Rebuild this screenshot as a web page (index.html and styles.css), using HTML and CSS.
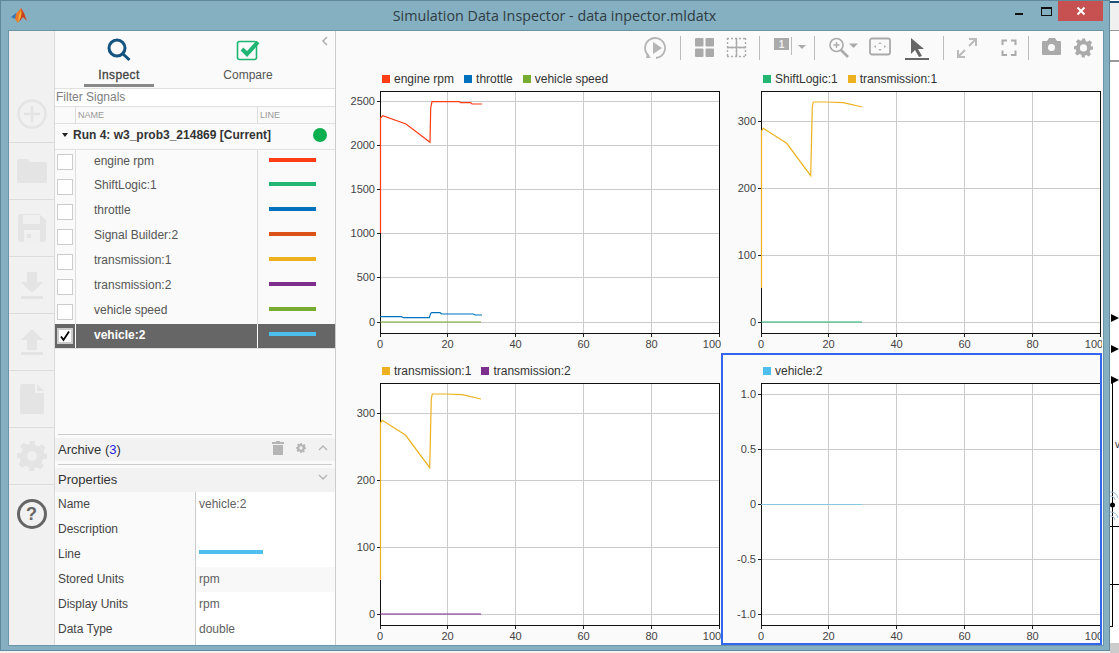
FILE: index.html
```html
<!DOCTYPE html>
<html lang="en">
<head>
    <title>Simulation Data Inspector</title>
    <link rel="stylesheet" href="styles.css">
</head>
<body>
<div class="window">
    <div class="titlebar">
        <svg class="logo" width="17" height="16" viewBox="0 0 17 16">
            <polygon points="0,9 5,5 8,8 4,11" fill="#3a78b5"/>
            <polygon points="5,6 10,0 12,4 7,15 4,11" fill="#e8792a"/>
            <polygon points="10,0 13,5 16,13 12,9 8,14 11,5" fill="#c8401c"/>
            <polygon points="8,7 10,3 10,9 7,14" fill="#f4b02e"/>
        </svg>
        <div class="title">Simulation Data Inspector - data inpector.mldatx</div>
        <div class="win-min"></div>
        <div class="win-max"></div>
        <div class="win-close">
            <svg width="10" height="10" viewBox="0 0 10 10"><path d="M1.5 1.5 8.5 8.5M8.5 1.5 1.5 8.5" stroke="#fff" stroke-width="2"/></svg>
        </div>
    </div>

    <div class="client">
        <div class="rail">
            <div class="rail-item rail-first">
                <svg width="30" height="30" viewBox="0 0 30 30"><circle cx="15" cy="15" r="13.5" fill="none" stroke="#e4e4e4" stroke-width="2.4"/><path d="M15 7v16M7 15h16" stroke="#e4e4e4" stroke-width="2.4"/></svg>
            </div>
            <div class="rail-item">
                <svg width="30" height="26" viewBox="0 0 30 26"><path d="M2 1h8l3 3h15a2 2 0 0 1 2 2v17a2 2 0 0 1-2 2H2a2 2 0 0 1-2-2V3a2 2 0 0 1 2-2z" fill="#e4e4e4"/></svg>
            </div>
            <div class="rail-item">
                <svg width="28" height="28" viewBox="0 0 28 28"><path d="M3 0h18l7 6v19a3 3 0 0 1-3 3H3a3 3 0 0 1-3-3V3a3 3 0 0 1 3-3z" fill="#e4e4e4"/><rect x="5" y="1" width="17" height="9" fill="#f0f0f0"/><rect x="6" y="16" width="16" height="12" fill="#f0f0f0"/><rect x="9" y="20" width="4" height="4" fill="#e4e4e4"/></svg>
            </div>
            <div class="rail-item">
                <svg width="22" height="27" viewBox="0 0 22 27"><path d="M6 0h10v10h6L11 21 0 10h6z" fill="#e4e4e4"/><rect y="24" width="22" height="3" fill="#e4e4e4"/></svg>
            </div>
            <div class="rail-item">
                <svg width="22" height="26" viewBox="0 0 22 26"><path d="M11 0l11 11h-6v10H6V11H0z" fill="#e4e4e4"/><rect y="23" width="22" height="3" fill="#e4e4e4"/></svg>
            </div>
            <div class="rail-item">
                <svg width="24" height="30" viewBox="0 0 24 30"><path d="M2 0h13v9h9v19a2 2 0 0 1-2 2H2a2 2 0 0 1-2-2V2a2 2 0 0 1 2-2z" fill="#e4e4e4"/><path d="M17 0l7 7h-7z" fill="#e4e4e4"/></svg>
            </div>
            <div class="rail-item">
                <svg width="30" height="30" viewBox="0 0 24 24"><path d="M10 0h4l.7 3.3 2.4 1 2.9-1.8 2.8 2.8-1.8 2.9 1 2.4L24 10v4l-3.3.7-1 2.4 1.8 2.9-2.8 2.8-2.9-1.8-2.4 1L14 24h-4l-.7-3.3-2.4-1-2.9 1.800-2.800-2.800 1.800-2.900-1-2.400L0 14v-4l3.300-.7 1-2.400L2.500 4 5.300 1.200 8.200 3l2.400-1z" fill="#e4e4e4"/><circle cx="12" cy="12" r="4" fill="#f0f0f0"/></svg>
            </div>
            <div class="rail-item rail-last">
                <div class="help">?</div>
            </div>
        </div>

        <div class="panel">
            <svg class="collapse" width="6" height="10" viewBox="0 0 6 10"><path d="M5 1 1 5l4 4" fill="none" stroke="#aaa" stroke-width="1.4"/></svg>
            <div class="tabs">
                <div class="tab tab-active">
                    <svg width="24" height="24" viewBox="0 0 24 24"><circle cx="10" cy="10" r="8" fill="none" stroke="#14527f" stroke-width="3"/><path d="M15.500 15.500 22.500 22" stroke="#14527f" stroke-width="3"/></svg>
                    <span>Inspect</span>
                </div>
                <div class="tab">
                    <svg width="24" height="24" viewBox="0 0 24 24"><rect x="1.500" y="3.500" width="19" height="18" rx="2" fill="none" stroke="#1eb573" stroke-width="1.600"/><path d="M6 11l5 5L22 4" fill="none" stroke="#1eb573" stroke-width="4"/></svg>
                    <span>Compare</span>
                </div>
            </div>
            <div class="filter">Filter Signals</div>
            <div class="col-head">
                <div class="cell-check"></div>
                <div class="cell-name">NAME</div>
                <div class="cell-line">LINE</div>
            </div>
            <div class="run">
                <span class="caret"></span>
                <span class="run-name">Run 4: w3_prob3_214869 [Current]</span>
                <span class="run-dot"></span>
            </div>
            <div class="signals">
                <div class="signal signal-first">
                    <div class="cell-check"><span class="box"></span></div>
                    <div class="cell-name">engine rpm</div>
                    <div class="cell-line"><span class="swatch c-red"></span></div>
                </div>
                <div class="signal">
                    <div class="cell-check"><span class="box"></span></div>
                    <div class="cell-name">ShiftLogic:1</div>
                    <div class="cell-line"><span class="swatch c-green"></span></div>
                </div>
                <div class="signal">
                    <div class="cell-check"><span class="box"></span></div>
                    <div class="cell-name">throttle</div>
                    <div class="cell-line"><span class="swatch c-blue"></span></div>
                </div>
                <div class="signal">
                    <div class="cell-check"><span class="box"></span></div>
                    <div class="cell-name">Signal Builder:2</div>
                    <div class="cell-line"><span class="swatch c-orange"></span></div>
                </div>
                <div class="signal">
                    <div class="cell-check"><span class="box"></span></div>
                    <div class="cell-name">transmission:1</div>
                    <div class="cell-line"><span class="swatch c-yellow"></span></div>
                </div>
                <div class="signal">
                    <div class="cell-check"><span class="box"></span></div>
                    <div class="cell-name">transmission:2</div>
                    <div class="cell-line"><span class="swatch c-purple"></span></div>
                </div>
                <div class="signal">
                    <div class="cell-check"><span class="box"></span></div>
                    <div class="cell-name">vehicle speed</div>
                    <div class="cell-line"><span class="swatch c-olive"></span></div>
                </div>
                <div class="signal signal-on">
                    <div class="cell-check">
                        <span class="box">
                            <svg width="14" height="14" viewBox="0 0 14 14"><path d="M3 7.500 5.500 11 11 2.500" fill="none" stroke="#000" stroke-width="1.800"/></svg>
                        </span>
                    </div>
                    <div class="cell-name">vehicle:2</div>
                    <div class="cell-line"><span class="swatch c-sky"></span></div>
                </div>
            </div>
            <div class="rule"></div>
            <div class="section section-archive">
                <span>Archive (<span class="count">3</span>)</span>
                <svg class="sec-trash" width="12" height="14" viewBox="0 0 12 14"><path d="M0 1h4V0h4v1h4v2H0zM1 4h10v10H1z" fill="#b5b5b5"/></svg>
                <svg class="sec-gear" width="10" height="10" viewBox="0 0 24 24"><path d="M10 0h4l.7 3.3 2.400 1 2.900-1.800 2.800 2.800-1.800 2.900 1 2.400L24 10v4l-3.300.7-1 2.400 1.800 2.900-2.800 2.800-2.900-1.800-2.400 1L14 24h-4l-.7-3.300-2.400-1-2.900 1.800-2.800-2.800 1.800-2.900-1-2.400L0 14v-4l3.300-.7 1-2.400L2.500 4l2.800-2.800L8.200 3l2.400-1z" fill="#b5b5b5"/><circle cx="12" cy="12" r="4" fill="#f2f2f2"/></svg>
                <svg class="sec-chev" width="10" height="6" viewBox="0 0 10 6"><path d="M1 5l4-4 4 4" fill="none" stroke="#b5b5b5" stroke-width="1.400"/></svg>
            </div>
            <div class="rule rule-mid"></div>
            <div class="section section-props">
                <span>Properties</span>
                <svg class="sec-chev" width="10" height="6" viewBox="0 0 10 6"><path d="M1 1l4 4 4-4" fill="none" stroke="#b5b5b5" stroke-width="1.400"/></svg>
            </div>
            <div class="props">
                <div class="prop"><div class="prop-key">Name</div><div class="prop-val">vehicle:2</div></div>
                <div class="prop"><div class="prop-key">Description</div><div class="prop-val"></div></div>
                <div class="prop"><div class="prop-key">Line</div><div class="prop-val"><span class="prop-line"></span></div></div>
                <div class="prop prop-alt"><div class="prop-key">Stored Units</div><div class="prop-val">rpm</div></div>
                <div class="prop"><div class="prop-key">Display Units</div><div class="prop-val">rpm</div></div>
                <div class="prop"><div class="prop-key">Data Type</div><div class="prop-val">double</div></div>
            </div>
        </div>

        <div class="plots">
            <div class="toolbar">
                <svg width="22" height="24" viewBox="0 0 22 24"><path d="M4 20A10 10 0 1 1 11 22" fill="none" stroke="#b5b5b5" stroke-width="1.800"/><path d="M8 6l9 6-9 6z" fill="#b5b5b5"/><path d="M2 17l4 5H1z" fill="#b5b5b5"/></svg>
                <div class="sep"></div>
                <svg width="20" height="24" viewBox="0 0 20 24"><g fill="#aaa"><rect x="1" y="2" width="8.500" height="8.500" rx="1"/><rect x="11.500" y="2" width="8.500" height="8.500" rx="1"/><rect x="1" y="12.500" width="8.500" height="8.500" rx="1"/><rect x="11.500" y="12.500" width="8.500" height="8.500" rx="1"/></g></svg>
                <svg width="19" height="24" viewBox="0 0 19 24"><path d="M0 2.500h19M0 11.500h19M0 20.500h19M.5 2v19M9.500 2v19M18.500 2v19" fill="none" stroke="#aaa" stroke-width="1.400" stroke-dasharray="2 2"/><path d="M9.500 2v19M0 11.500h19" stroke="#aaa" stroke-width="1.400"/></svg>
                <div class="sep"></div>
                <svg class="free" width="32" height="24" viewBox="-1 0 32 24"><rect x="0" y="2" width="15" height="12" fill="#aaa"/><text x="7.500" y="12" class="tool-num">1</text><path d="M17.500 1v18" stroke="#bbb"/><path d="M24 9h8l-4 4z" fill="#aaa"/></svg>
                <div class="sep sep-near"></div>
                <svg class="free" width="28" height="24" viewBox="0 0 28 24"><circle cx="8.500" cy="9" r="6.500" fill="none" stroke="#aaa" stroke-width="1.600"/><path d="M5.500 9h6M8.500 6v6" stroke="#aaa" stroke-width="1.300"/><path d="M13 14l7 7" stroke="#aaa" stroke-width="2.600"/><path d="M21 7.500h9l-4.500 4.500z" fill="#aaa"/></svg>
                <svg width="22" height="24" viewBox="0 0 22 24"><rect x="1" y="2.500" width="20" height="16" rx="2" fill="none" stroke="#aaa" stroke-width="1.800"/><path d="M11 6l-1.500 2h3zM11 15l-1.500-2h3zM5 10.500l2-1.500v3zM17 10.500l-2-1.500v3z" fill="#aaa"/></svg>
                <svg width="26" height="24" viewBox="0 0 26 24"><path d="M7 2l13 11h-6l4 7-3 1-4-7-4 4z" fill="#666"/><rect x="1" y="22" width="24" height="2" fill="#666"/></svg>
                <div class="sep"></div>
                <svg width="19" height="24" viewBox="0 0 19 24"><path d="M12 3h7v7M19 3 12 10M8 21H1v-7M1 21l7-7" fill="none" stroke="#bbb" stroke-width="2"/></svg>
                <svg class="wide" width="13" height="24" viewBox="0 0 13 24"><path d="M.5 9V4.500H5M9 4.500h4.500V9M13.500 14.500V19H9M5 19H.5v-4.500" fill="none" stroke="#aaa" stroke-width="2"/></svg>
                <div class="sep"></div>
                <svg width="19" height="24" viewBox="0 0 19 24"><path d="M1 5h4l2-3h6l2 3h3a1 1 0 0 1 1 1v12a1 1 0 0 1-1 1H1a1 1 0 0 1-1-1V6a1 1 0 0 1 1-1z" fill="#aaa"/><circle cx="9.500" cy="11.500" r="3.500" fill="#fafafa"/></svg>
                <svg width="19" height="19" viewBox="0 0 24 24"><path d="M10 0h4l.7 3.300 2.400 1 2.900-1.800 2.800 2.800-1.800 2.900 1 2.400L24 10v4l-3.300.7-1 2.400 1.800 2.900-2.800 2.800-2.900-1.800-2.400 1L14 24h-4l-.7-3.300-2.400-1-2.900 1.800-2.800-2.800 1.800-2.900-1-2.400L0 14v-4l3.300-.7 1-2.400L2.500 4l2.800-2.800L8.200 3l2.400-1z" fill="#aaa" transform="translate(0 3)"/><circle cx="12" cy="15" r="4.500" fill="#fafafa"/></svg>
            </div>

            <div class="plot-grid">
                <div class="plot">
                    <div class="legend">
                        <span class="key"><i class="c-red"></i>engine rpm</span>
                        <span class="key"><i class="c-blue"></i>throttle</span>
                        <span class="key"><i class="c-olive"></i>vehicle speed</span>
                    </div>
                    <svg class="axes" width="385" height="262" viewBox="336 91 385 262">
                        <rect x="380.500" y="91.500" width="339" height="242" fill="#fff"/>
                        <path class="grid" d="M447.500 92V333M515.500 92V333M583.500 92V333M651.500 92V333M381 101.500H719M381 145.500H719M381 189.500H719M381 233.500H719M381 277.500H719M381 322.500H719"/>
                        <rect class="frame" x="380.500" y="91.500" width="339" height="242"/>
                        <polyline class="curve" stroke="#0072bd" points="380,316.700 401.700,316.700 403.300,317.700 429.300,317.700 430.700,313.300 431.700,312.700 440,312.700 441.700,314 473.300,314 475,315 482,315"/>
                        <polyline class="curve" stroke="#77ac30" points="380,322 481,322"/>
                        <polyline class="curve" stroke="#ff3c14" points="380.500,233 380.500,118 382.700,115.700 406,124 430,142.300 430.700,108 432,101.700 459.300,101.700 460.700,102.700 470.700,102.700 472,104 482,104"/>
                        <path class="ticks" d="M377 101.500h3M377 145.500h3M377 189.500h3M377 233.500h3M377 277.500h3M377 322.500h3M380.500 334v3M447.500 334v3M515.500 334v3M583.500 334v3M651.500 334v3M719.500 334v3"/>
                        <g class="ylab"><text x="375" y="105">2500</text><text x="375" y="149">2000</text><text x="375" y="193">1500</text><text x="375" y="237">1000</text><text x="375" y="281">500</text><text x="375" y="326">0</text></g>
                        <g class="xlab"><text x="380" y="348">0</text><text x="447.500" y="348">20</text><text x="515.500" y="348">40</text><text x="583.500" y="348">60</text><text x="651.500" y="348">80</text><text x="712" y="348">100</text></g>
                    </svg>
                </div>

                <div class="plot">
                    <div class="legend legend-right">
                        <span class="key"><i class="c-green"></i>ShiftLogic:1</span>
                        <span class="key"><i class="c-yellow"></i>transmission:1</span>
                    </div>
                    <svg class="axes" width="381" height="262" viewBox="721 91 381 262">
                        <rect x="761.500" y="91.500" width="339" height="242" fill="#fff"/>
                        <path class="grid" d="M828.500 92V333M896.500 92V333M964.500 92V333M1032.500 92V333M762 121.500H1100M762 188.500H1100M762 255.500H1100M762 322.500H1100"/>
                        <rect class="frame" x="761.500" y="91.500" width="339" height="242"/>
                        <polyline class="curve" stroke="#22b573" points="761,322 862,322"/>
                        <polyline class="curve" stroke="#edb120" points="761.500,288 761.500,131 763.300,128.300 786.700,143.300 810.700,175.700 812.300,106.700 813.300,102 826.700,102 843.300,102.700 862.300,107"/>
                        <path class="ticks" d="M758 121.500h3M758 188.500h3M758 255.500h3M758 322.500h3M761.500 334v3M828.500 334v3M896.500 334v3M964.500 334v3M1032.500 334v3M1100.500 334v3"/>
                        <g class="ylab"><text x="756" y="125">300</text><text x="756" y="192">200</text><text x="756" y="259">100</text><text x="756" y="326">0</text></g>
                        <g class="xlab"><text x="761" y="348">0</text><text x="828.500" y="348">20</text><text x="896.500" y="348">40</text><text x="964.500" y="348">60</text><text x="1032.500" y="348">80</text><text x="1094" y="348">100</text></g>
                    </svg>
                </div>

                <div class="plot">
                    <div class="legend">
                        <span class="key"><i class="c-yellow"></i>transmission:1</span>
                        <span class="key"><i class="c-purple"></i>transmission:2</span>
                    </div>
                    <svg class="axes" width="385" height="262" viewBox="336 383 385 262">
                        <rect x="380.500" y="383.500" width="339" height="242" fill="#fff"/>
                        <path class="grid" d="M447.500 384V625M515.500 384V625M583.500 384V625M651.500 384V625M381 413.500H719M381 480.500H719M381 547.500H719M381 614.500H719"/>
                        <rect class="frame" x="380.500" y="383.500" width="339" height="242"/>
                        <polyline class="curve" stroke="#7e2f8e" points="380,614 481,614"/>
                        <polyline class="curve" stroke="#edb120" points="380.500,580 380.500,423 382.300,420.300 405.700,435.300 429.700,467.700 431.300,398.700 432.300,394 445.700,394 462.300,394.700 481,399"/>
                        <path class="ticks" d="M377 413.500h3M377 480.500h3M377 547.500h3M377 614.500h3M380.500 626v3M447.500 626v3M515.500 626v3M583.500 626v3M651.500 626v3M719.500 626v3"/>
                        <g class="ylab"><text x="375" y="417">300</text><text x="375" y="484">200</text><text x="375" y="551">100</text><text x="375" y="618">0</text></g>
                        <g class="xlab"><text x="380" y="640">0</text><text x="447.500" y="640">20</text><text x="515.500" y="640">40</text><text x="583.500" y="640">60</text><text x="651.500" y="640">80</text><text x="712" y="640">100</text></g>
                    </svg>
                </div>

                <div class="plot plot-selected">
                    <div class="legend legend-right">
                        <span class="key"><i class="c-sky"></i>vehicle:2</span>
                    </div>
                    <svg class="axes" width="381" height="262" viewBox="721 383 381 262">
                        <rect x="761.500" y="383.500" width="339" height="242" fill="#fff"/>
                        <path class="grid" d="M828.500 384V625M896.500 384V625M964.500 384V625M1032.500 384V625M762 394.500H1100M762 449.500H1100M762 504.500H1100M762 559.500H1100M762 614.500H1100"/>
                        <rect class="frame" x="761.500" y="383.500" width="339" height="242"/>
                        <polyline class="curve" stroke="#8ac6e0" points="761,504.500 862,504.500"/>
                        <path class="ticks" d="M758 394.500h3M758 449.500h3M758 504.500h3M758 559.500h3M758 614.500h3M761.500 626v3M828.500 626v3M896.500 626v3M964.500 626v3M1032.500 626v3M1100.500 626v3"/>
                        <g class="ylab"><text x="756" y="398">1.0</text><text x="756" y="453">0.5</text><text x="756" y="508">0</text><text x="756" y="563">-0.5</text><text x="756" y="618">-1.0</text></g>
                        <g class="xlab"><text x="761" y="640">0</text><text x="828.500" y="640">20</text><text x="896.500" y="640">40</text><text x="964.500" y="640">60</text><text x="1032.500" y="640">80</text><text x="1094" y="640">100</text></g>
                    </svg>
                </div>
            </div>
        </div>
    </div>
</div>

<!-- bit of the model window that shows behind the inspector -->
<svg class="behind" width="9" height="653" viewBox="1110 0 9 653">
    <rect x="1110" y="1" width="9" height="2" fill="#1d4e7a"/>
    <rect x="1110" y="3" width="9" height="27" fill="#f0f0f0"/>
    <rect x="1110" y="30" width="9" height="1" fill="#999"/>
    <rect x="1110" y="60" width="9" height="2" fill="#999"/>
    <path d="M1111 314l8 4-8 4zM1111 345l8 4-8 4zM1111 376l8 4-8 4z" fill="#000"/>
    <path d="M1112.500 380V626M1110 526.500h9M1110 584.500h9M1110 626.500h3" stroke="#000" fill="none"/>
    <circle cx="1112.500" cy="505" r="2.500" fill="#000"/>
    <path d="M1110 492a8 8 0 0 1 8 6M1110 496a5 5 0 0 1 5 4M1110 512a8 8 0 0 1 8 6M1110 516a5 5 0 0 1 5 4" stroke="#9dbbd6" fill="none"/>
    <text x="1115" y="448" class="behind-text">v</text>
    <rect x="1110" y="643" width="9" height="10" fill="#ccc"/>
</svg>
</body>
</html>
```

FILE: styles.css
```css
* {
    box-sizing: border-box;
}
body {
    margin: 0;
    height: 653px;
    display: flex;
    align-items: flex-start;
    background-color: #f2f2f2;
    overflow: hidden;
    font-family: "Liberation Sans", Arial, sans-serif;
    font-size: 12px;
}
.window {
    width: 1110px;
    height: 651px;
    display: flex;
    flex-direction: column;
    background-color: #85b0c1;
    border: 1px solid #62899b;
}
.behind {
    background-color: #fff;
    flex-shrink: 0;
}
.behind-text {
    font-size: 10px;
    fill: #333;
}

/* title bar */
.titlebar {
    height: 30px;
    flex-shrink: 0;
    display: flex;
    align-items: flex-start;
}
.logo {
    margin: 7px 0 0 10px;
}
.title {
    flex: 1;
    text-align: center;
    padding: 6px 0 0 66px;
    font-family: "Open Sans", sans-serif;
    font-size: 14.3px;
    line-height: 18px;
    color: #2f3c44;
}
.win-min {
    width: 8px;
    height: 2px;
    margin: 12px 18px 0 0;
    background: #111;
}
.win-max {
    width: 11px;
    height: 9px;
    margin: 6px 6px 0 0;
    border: 1px solid #111;
    border-top-width: 2px;
}
.win-close {
    width: 45px;
    height: 20px;
    margin-right: 6px;
    background: #c75050;
    display: flex;
    align-items: center;
    justify-content: center;
}

.client {
    flex: 1;
    margin: 0 6px 5px 8px;
    display: flex;
    min-height: 0;
    background: #fafafa;
    box-shadow: 0 0 0 1px #6b95a6;
}

/* left icon rail */
.rail {
    width: 46px;
    flex-shrink: 0;
    display: flex;
    flex-direction: column;
    background: #f1f1f1;
    border-right: 1px solid #d9d9d9;
}
.rail-item {
    height: 57px;
    flex-shrink: 0;
    display: flex;
    align-items: center;
    justify-content: center;
    border-bottom: 1px solid #dcdcdc;
}
.rail-first {
    height: 112px;
    align-items: flex-end;
    padding-bottom: 13px;
}
.rail-last {
    flex: 1;
    border-bottom: none;
    align-items: flex-start;
    padding-top: 14px;
}
.help {
    width: 30px;
    height: 30px;
    border: 3px solid #666;
    border-radius: 50%;
    text-align: center;
    font-weight: bold;
    font-size: 18px;
    line-height: 24px;
    color: #666;
}

/* signal panel */
.panel {
    position: relative;
    width: 281px;
    flex-shrink: 0;
    display: flex;
    flex-direction: column;
    border-right: 1px solid #ccc;
    color: #555;
}
.collapse {
    position: absolute;
    top: 5px;
    right: 7px;
}
.tabs {
    height: 57px;
    flex-shrink: 0;
    display: flex;
}
.tab {
    width: 70px;
    height: 56px;
    display: flex;
    flex-direction: column;
    align-items: center;
    padding-top: 7px;
    margin-left: 59px;
    font-size: 12px;
}
.tab span {
    margin-top: 6px;
    line-height: 14px;
}
.tab-active {
    margin-left: 29px;
    color: #444;
    letter-spacing: 0.4px;
    -webkit-text-stroke: 0.3px #444;
    border-bottom: 3px solid #888;
}
.filter {
    height: 19px;
    flex-shrink: 0;
    padding-left: 1px;
    line-height: 17px;
    color: #808080;
    background: #fff;
    border-top: 1px solid #e0e0e0;
    border-bottom: 1px solid #e0e0e0;
}
.col-head {
    height: 17px;
    flex-shrink: 0;
    display: flex;
    font-size: 9px;
    line-height: 16px;
    color: #999;
    border-bottom: 1px solid #e0e0e0;
}
.cell-check {
    width: 21px;
    flex-shrink: 0;
    border-right: 1px solid #ddd;
    display: flex;
    align-items: center;
    justify-content: center;
}
.cell-name {
    width: 182px;
    flex-shrink: 0;
    border-right: 1px solid #ddd;
}
.cell-line {
    flex: 1;
}
.col-head .cell-name {
    padding-left: 2px;
}
.col-head .cell-line {
    padding-left: 2px;
}
.run {
    height: 26px;
    flex-shrink: 0;
    display: flex;
    align-items: center;
    padding: 0 8px 3px 7px;
    border-bottom: 1px solid #e0e0e0;
    color: #333;
    font-weight: bold;
}
.caret {
    width: 0;
    height: 0;
    border: 3px solid transparent;
    border-top: 4px solid #222;
    border-bottom: none;
    margin-right: 5px;
}
.run-name {
    flex: 1;
}
.run-dot {
    width: 14px;
    height: 14px;
    border-radius: 50%;
    background: #0bb04e;
}
.signals {
    flex: 1;
    min-height: 0;
}
.signal {
    height: 25px;
    display: flex;
}
.signal-first {
    height: 24px;
}
.signal .cell-name {
    padding-left: 18px;
    line-height: 22px;
}
.signal .cell-line {
    padding: 8px 0 0 11px;
}
.box {
    width: 16px;
    height: 16px;
    display: block;
    background: #fff;
    border: 1px solid #ccc;
}
.box svg {
    display: block;
}
.swatch {
    display: block;
    width: 47px;
    height: 4px;
}
.signal-on {
    background: #666;
    border-bottom: 1px solid #e0e0e0;
    color: #fff;
    font-weight: bold;
}
.signal-on .cell-check {
    background: #666;
    border-right-color: #fff;
}
.signal-on .cell-name {
    border-right-color: #fff;
}
.signal-on .box {
    border: 2px solid #ccc;
}
.signal-on .box svg {
    margin: -1px;
}

.c-red { background: #ff3c14; }
.c-green { background: #22b573; }
.c-blue { background: #0072bd; }
.c-orange { background: #d95319; }
.c-yellow { background: #edb120; }
.c-purple { background: #7e2f8e; }
.c-olive { background: #77ac30; }
.c-sky { background: #4dbfef; }

.rule {
    height: 1px;
    flex-shrink: 0;
    margin: 0 3px 3px;
    background: #ccc;
}
.rule-mid {
    margin-top: 3px;
}
.section {
    flex-shrink: 0;
    display: flex;
    align-items: center;
    padding-left: 3px;
    background: #f2f2f2;
    color: #333;
    font-size: 13px;
}
.section-archive {
    height: 23px;
}
.section-props {
    height: 24px;
    padding-bottom: 2px;
    justify-content: space-between;
}
.count {
    color: #2222dd;
}
.sec-trash {
    margin: -4px 0 0 auto;
}
.sec-gear {
    margin: -4px 0 0 12px;
}
.sec-chev {
    margin: -4px 7px 0 12px;
}
.props {
    flex-shrink: 0;
    height: 153px;
}
.prop {
    height: 25px;
    display: flex;
    line-height: 25px;
}
.prop-key {
    width: 140px;
    flex-shrink: 0;
    padding-left: 3px;
    color: #444;
}
.prop-val {
    flex: 1;
    padding-left: 3px;
    background: #fff;
    color: #606060;
    border-left: 1px solid #ccc;
}
.prop:last-child .prop-val {
    height: 28px;
}
.prop-alt .prop-val {
    background: #f8f8f8;
}
.prop-line {
    display: block;
    width: 64px;
    height: 4px;
    margin-top: 8px;
    background: #4dbfef;
}

/* plots */
.plots {
    flex: 1;
    min-width: 0;
    display: flex;
    flex-direction: column;
}
.toolbar {
    height: 30px;
    flex-shrink: 0;
    display: flex;
    justify-content: flex-end;
    align-items: flex-start;
    gap: 13px;
    padding: 5px 10px 0 0;
}
.toolbar svg {
    display: block;
    overflow: visible;
}
.sep {
    width: 1px;
    height: 24px;
    background: #bbb;
}
.sep-near {
    margin-left: -4px;
}
.wide {
    margin-left: 13px;
}
.tool-num {
    font-size: 10px;
    font-weight: bold;
    fill: #eee;
    text-anchor: middle;
}
.plot-grid {
    flex: 1;
    display: grid;
    grid-template-columns: 385px 381px;
    grid-template-rows: 292px 292px;
}
.plot-selected {
    outline: 2px solid #3366ee;
    outline-offset: -2px;
}
.legend {
    height: 30px;
    display: flex;
    gap: 10px;
    padding: 11px 0 0 46px;
    line-height: 14px;
    color: #333;
}
.legend-right {
    padding-left: 42px;
}
.key i {
    display: inline-block;
    width: 8px;
    height: 8px;
    margin-right: 4px;
}
.axes {
    display: block;
    font-family: "Liberation Sans", Arial, sans-serif;
    font-size: 11px;
}
.grid {
    stroke: #ccc;
    fill: none;
}
.curve {
    fill: none;
    stroke-width: 1.2;
}
.frame {
    fill: none;
    stroke: #111;
}
.ticks {
    stroke: #222;
    fill: none;
}
.ylab text {
    text-anchor: end;
    fill: #444;
}
.xlab text {
    text-anchor: middle;
    fill: #444;
}
```
